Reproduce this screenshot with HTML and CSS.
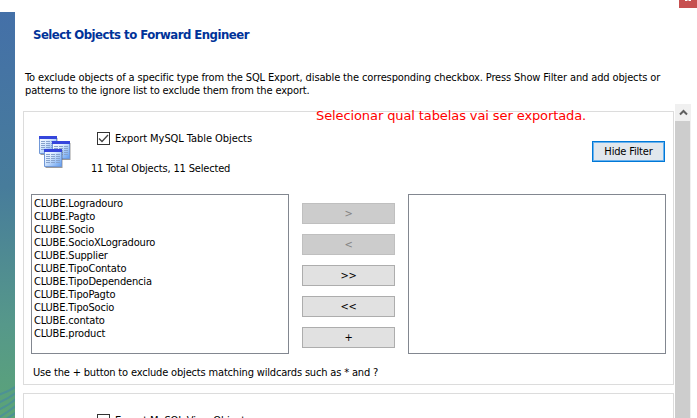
FILE: index.html
```html
<!DOCTYPE html>
<html lang="en">
<head>
<meta charset="utf-8">
<title>Forward Engineer</title>
<link rel="stylesheet" href="styles.css">
</head>
<body>
<div class="window">
  <aside class="sidebar">
    <svg width="15" height="34" viewBox="0 0 15 34" fill="none" stroke="#4d9295" stroke-width="2"><path d="M-2 11Q8 8 17 2M-2 19Q8 15 17 8M-2 26Q8 22 17 14M-2 34Q8 28 17 21M3 37L17 28"/></svg>
  </aside>
  <main class="content">
    <h1 class="title">Select Objects to Forward Engineer</h1>
    <p class="intro"><span class="intro-first">To exclude objects of a specific type from the SQL Export, disable the corresponding checkbox. Press Show Filter and add objects or</span><br><span class="intro-second">patterns to the ignore list to exclude them from the export.</span></p>
    <section class="panel">
      <header class="panel-head">
        <svg class="tables-icon" width="33" height="33" viewBox="0 0 33 33">
          <defs>
            <linearGradient id="sheet" x2="1" y2="1"><stop stop-color="#fff"/><stop offset=".4" stop-color="#d9eaff"/><stop offset="1" stop-color="#5f9cf0"/></linearGradient>
            <g id="table">
              <path d="M1.500 2h17v17h-17z" fill="#666" opacity=".65"/>
              <path d="M.5 .5h17v17H.5z" fill="url(#sheet)" stroke="#7198d7"/>
              <path d="M0 0h18v3H0z" fill="#3546dc"/>
              <path d="M2 5.500h4m1 0h4m1 0h4M2 7.500h4m1 0h4m1 0h4M2 9.500h4m1 0h4m1 0h4M2 11.500h4m1 0h4m1 0h4M2 13.500h4m1 0h4m1 0h4" stroke="#86a2cc"/>
            </g>
          </defs>
          <use href="#table"/><use href="#table" x="13" y="5"/><use href="#table" x="5" y="13"/>
        </svg>
        <div class="summary">
          <label class="option"><span class="box"><svg width="11" height="11" viewBox="0 0 11 11" fill="none" stroke="#444" stroke-width="1.300"><path d="M1 5.500L4 8.500L10 2"/></svg></span><span class="option-text">Export MySQL Table Objects</span></label>
          <div class="count">11 Total Objects, 11 Selected</div>
        </div>
        <button class="filter">Hide Filter</button>
      </header>
      <div class="lists">
        <ul class="list">
          <li>CLUBE.Logradouro</li><li>CLUBE.Pagto</li><li>CLUBE.Socio</li><li>CLUBE.SocioXLogradouro</li><li>CLUBE.Supplier</li><li>CLUBE.TipoContato</li><li>CLUBE.TipoDependencia</li><li>CLUBE.TipoPagto</li><li>CLUBE.TipoSocio</li><li>CLUBE.contato</li><li>CLUBE.product</li>
        </ul>
        <div class="moves">
          <button disabled>&gt;</button><button disabled>&lt;</button><button>&gt;&gt;</button><button>&lt;&lt;</button><button>+</button>
        </div>
        <ul class="list"></ul>
      </div>
      <p class="hint">Use the + button to exclude objects matching wildcards such as * and ?</p>
    </section>
    <section class="panel next">
      <label class="option"><span class="box"></span><span class="option-text">Export MySQL View Objects</span></label>
    </section>
  </main>
  <div class="scrollbar"><div class="up"><svg width="9" height="7" viewBox="0 0 9 7" fill="none" stroke="#606060" stroke-width="2"><path d="M1 5.500L4.500 2L8 5.500"/></svg></div><div class="thumb"></div></div>
  <div class="close"><svg width="6" height="2"><path d="M0 0h2l1 1H0zM4 0h2v1H3z" fill="#fff"/></svg></div>
  <div class="note">Selecionar qual tabelas vai ser exportada.</div>
</div>
</body>
</html>
```
FILE: styles.css
```css
* { box-sizing: border-box; }
body { margin: 0; background: #fff; color: #000; font: 11px/13px "DejaVu Sans Condensed", "DejaVu Sans", sans-serif; font-stretch: condensed; letter-spacing: -.17px; }
h1, p, ul { margin: 0; padding: 0; }
.window { position: relative; display: flex; width: 697px; height: 418px; overflow: hidden; }
.sidebar { flex: none; width: 15px; margin-top: 12px; display: flex; align-items: flex-end; background: linear-gradient(#4470a8, #477c9b 43%, #56988a 77%, #5ba477); }
.content { width: 659px; padding: 26px 0 0 8px; flex: none; white-space: nowrap; }
.title { margin-left: 10px; font-size: 13px; line-height: 17px; color: #003399; letter-spacing: -.51px; }
.intro { margin: 28px 0 0 2px; letter-spacing: -.13px; }
.intro-second { letter-spacing: -.15px; }
.panel { width: 651px; height: 274px; margin-top: 14px; border: 1px solid #dcdcdc; padding: 20px 7px 0; }
.panel-head { display: flex; height: 62px; }
.tables-icon { margin: 4px 0 0 8px; }
.summary { margin-left: 19px; padding-left: 6px; }
.option { display: flex; align-items: center; gap: 5px; height: 13px; letter-spacing: -.06px; }
.box { display: flex; width: 13px; height: 13px; border: 1px solid #333; }
.count { margin: 17px 0 0 -6px; }
.filter { width: 73px; height: 21px; margin: 9px 1px 0 auto; border: 1px solid #0078d7; box-shadow: inset 0 0 0 1px #69b1ed; background: #e1e7ed; }
button { padding: 0; font: inherit; letter-spacing: inherit; color: #000; }
.lists { display: flex; }
.list { width: 258px; height: 160px; border: 1px solid #828790; padding: 2px; list-style: none; }
.moves { width: 93px; margin: 9px 13px 0; display: flex; flex-direction: column; gap: 10px; }
.moves button { height: 21px; border: 1px solid #adadad; background: #e1e1e1; }
.moves button:disabled { background: #ccc; border-color: #bfbfbf; color: #838383; }
.hint { margin: 12px 0 0 2px; }
.next { margin-top: 8px; padding: 20px 0 0 73px; }
.scrollbar { width: 16px; margin: 104px 0 0 1px; background: #f0f0f0; }
.up { height: 17px; display: flex; align-items: center; justify-content: center; }
.thumb { width: 15px; height: 297px; background: #cdcdcd; }
.close { position: absolute; top: 0; right: 0; width: 18px; height: 8px; background: #c75050; display: flex; justify-content: center; }
.note { position: absolute; left: 316px; top: 107px; font: 13px/17px "DejaVu Sans", sans-serif; font-stretch: normal; letter-spacing: -.1px; color: #f00; white-space: nowrap; }
```
